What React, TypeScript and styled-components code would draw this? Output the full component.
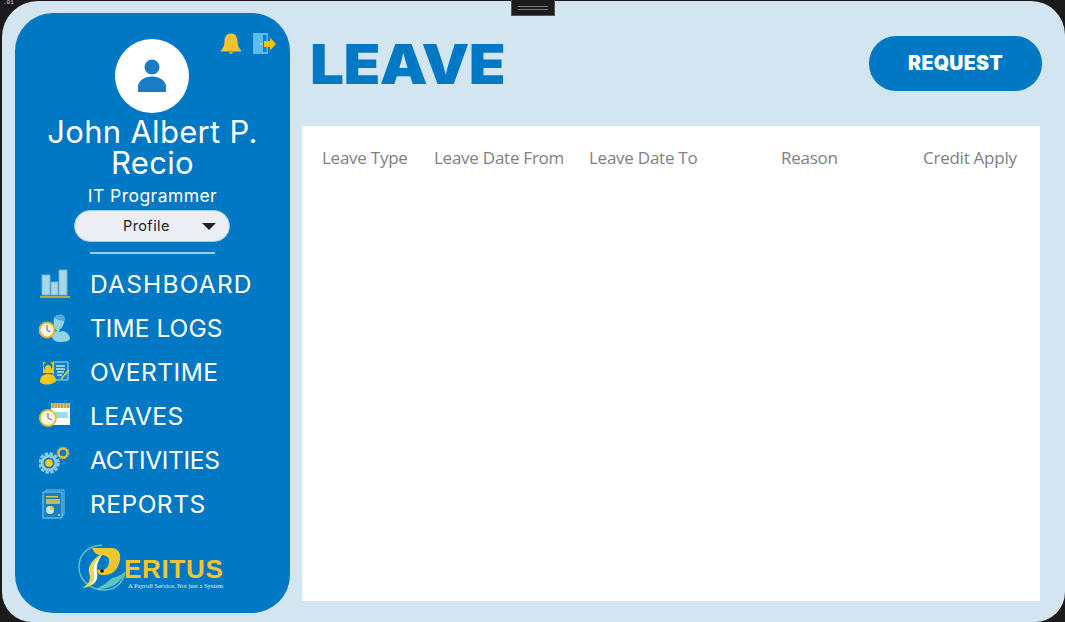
import React from "react";
import styled, { createGlobalStyle } from "styled-components";

const Global = createGlobalStyle`
  html, body { margin: 0; padding: 0; width: 1065px; height: 622px; overflow: hidden; background: #1b1b1b; }
  #root { width: 1065px; height: 622px; }
  * { box-sizing: border-box; }
`;

const Desktop = styled.div`
  position: relative;
  width: 1065px;
  height: 622px;
  padding: 1px 0 0 2px;
  background: #1b1b1b;
`;

const Window = styled.div`
  width: 1063px;
  height: 621px;
  display: flex;
  gap: 12px;
  padding: 12px 0 9px 13px;
  background: #d4e5f2;
  border-radius: 36px 34px 30px 30px;
`;

const BackdropText = styled.span`
  position: absolute;
  top: 0;
  left: 3px;
  color: #d8d8d8;
  font: 400 6px/6px "Liberation Mono", monospace;
`;

const Notch = styled.div`
  position: absolute;
  top: 0;
  left: 511px;
  width: 44px;
  height: 16px;
  background: #1c1c1c;
  border: 1px solid #555;
  border-top: none;
  display: flex;
  flex-direction: column;
  align-items: center;
  gap: 2px;
  padding-top: 6px;
`;

const NotchLine = styled.span`
  width: 30px;
  height: 1px;
  background: #777;
`;

const Sidebar = styled.aside`
  width: 275px;
  height: 600px;
  flex: none;
  display: flex;
  flex-direction: column;
  align-items: center;
  padding-top: 26px;
  position: relative;
  background: #0078c4;
  border-radius: 38px;
`;

const TopIcons = styled.div`
  position: absolute;
  top: 19px;
  left: 204px;
  display: flex;
  gap: 10px;
  align-items: center;
`;

const Avatar = styled.div`
  width: 74px;
  height: 74px;
  flex: none;
  margin-right: 2px;
  border-radius: 50%;
  background: #fff;
  display: flex;
  align-items: center;
  justify-content: center;
`;

const Name = styled.div`
  width: 230px;
  margin-top: 3px;
  color: #fff;
  font: 400 31px/31px "Inter", "Liberation Sans", sans-serif;
  letter-spacing: 0.3px;
  text-align: center;
`;

const Role = styled.div`
  margin-top: 7px;
  color: #fff;
  font: 400 17.5px/22px "Inter", "Liberation Sans", sans-serif;
  letter-spacing: 0.45px;
  text-align: center;
`;

const ProfileSelect = styled.div`
  width: 156px;
  height: 32px;
  margin-top: 3px;
  margin-right: 1px;
  padding: 0 13px 0 48px;
  flex: none;
  display: flex;
  align-items: center;
  justify-content: space-between;
  background: #ebeff3;
  border: 1px solid #9fc8e6;
  border-radius: 16px;
  color: #222;
  font: 400 14.5px/1 "Inter", "Liberation Sans", sans-serif;
  letter-spacing: 0.4px;
`;

const Caret = styled.span`
  width: 0;
  height: 0;
  border-left: 7px solid transparent;
  border-right: 7px solid transparent;
  border-top: 7px solid #222;
`;

const Divider = styled.div`
  width: 125px;
  height: 2px;
  flex: none;
  margin-top: 10px;
  background: #9fcbea;
`;

const Nav = styled.nav`
  width: 100%;
  margin-top: 8px;
  padding-left: 24px;
  display: flex;
  flex-direction: column;
`;

const NavItem = styled.div<{ $track: number }>`
  height: 44px;
  display: flex;
  align-items: center;
  gap: 19px;
  color: #fff;
  font: 400 24.5px/1 "Inter", "Liberation Sans", sans-serif;
  letter-spacing: ${(p) => p.$track}px;
`;

const NavIcon = styled.svg`
  width: 32px;
  height: 32px;
  flex: none;
`;

const Logo = styled.svg`
  width: 150px;
  height: 50px;
  flex: none;
  margin-top: 18px;
  margin-left: 1px;
`;

const LogoWord = styled.text`
  fill: #f0c62e;
  font: 700 26px "Liberation Sans", Arial, sans-serif;
  letter-spacing: 0.7px;
`;

const LogoTag = styled.text`
  fill: #e8f0f6;
  font: 400 6.5px "Liberation Serif", serif;
`;

const Main = styled.main`
  flex: 1;
  display: flex;
  flex-direction: column;
  min-width: 0;
`;

const Header = styled.header`
  height: 113px;
  display: flex;
  align-items: flex-start;
  justify-content: space-between;
  padding: 23px 23px 0 8px;
`;

const Title = styled.h1`
  margin: 1px 0 0;
  color: #0078c4;
  font: 900 55.5px/54px "Inter", "Liberation Sans", sans-serif;
  letter-spacing: -0.6px;
  transform: scaleX(1.085);
  transform-origin: left center;
`;

const RequestButton = styled.button`
  width: 173px;
  height: 55px;
  border: none;
  border-radius: 27px;
  background: #0078c4;
  color: #fff;
  font: 900 19.5px/1 "Inter", "Liberation Sans", sans-serif;
  letter-spacing: 0.3px;
`;

const Panel = styled.section`
  width: 738px;
  height: 475px;
  background: #fff;
`;

const Columns = styled.div`
  display: flex;
  align-items: center;
  height: 62px;
  padding-left: 20px;
  color: #808080;
  font: 400 17px/1 "Open Sans", "Liberation Sans", sans-serif;
  letter-spacing: -0.25px;
`;

const Column = styled.div<{ $w: number }>`
  width: ${(p) => p.$w}px;
  flex: none;
  white-space: nowrap;
`;

const Bell = () => (
  <svg width="24" height="24" viewBox="0 0 24 24">
    <path d="M12 1.500c-4.600 0-6.500 3.600-6.500 7.500 0 4.600-1.200 7-3.700 9.500v1h20.400v-1c-2.500-2.500-3.700-4.900-3.700-9.500 0-3.900-1.900-7.500-6.500-7.500z" fill="#f2c230" />
    <path d="M10 20h4c0 1.300-.8 2-2 2s-2-.7-2-2z" fill="#e0a91f" />
  </svg>
);

const Door = () => (
  <svg width="24" height="24" viewBox="0 0 24 24">
    <path d="M0 1h15v21H0z" fill="#5dbcef" />
    <path d="M10 3h3.500v17H10z" fill="#0f80c9" />
    <circle cx="8" cy="12" r=".8" fill="#d8f0fb" />
    <path d="M11 9h6V5.500l6 6.500-6 6.500V15h-6z" fill="#fdc010" />
  </svg>
);

const DashboardIcon = () => (
  <NavIcon viewBox="0 0 32 32">
    <path d="M3 7h8v20H3zM12 14h7v13h-7zM20 2h8v25h-8z" fill="#a9d8ea" stroke="#6db4d8" />
    <path d="M1 28h30v2H1z" fill="#b9a84e" />
  </NavIcon>
);

const TimeIcon = () => (
  <NavIcon viewBox="0 0 32 32">
    <path d="M15 6c1-3 5-4 8-3 3 1 3 4 2 8-1 3-2 5-4 6l-1 3 4-1c4 1 7 4 7 8-1 2-4 3-9 3-5 0-9-2-9-6 0-2 2-4 5-5-3-3-4-8-3-13z" fill="#90d4e8" />
    <path d="M15 6c1-3 5-4 8-3 3 1 3 4 2 6-3-1-7-1-10-3z" fill="#4fa8d6" />
    <circle cx="8" cy="18" r="7.500" fill="#f4f4ec" stroke="#e2b52b" strokeWidth="2" />
    <path d="M8 13v5l3 2" fill="none" stroke="#777" strokeWidth="1.200" />
  </NavIcon>
);

const OvertimeIcon = () => (
  <NavIcon viewBox="0 0 32 32">
    <path d="M14 6h15v18H14z" fill="#0d80c8" stroke="#a6d8ef" />
    <path d="M17 10h9M17 13h9M18 16h7M18 19h5" stroke="#c3e7f5" strokeWidth="1.300" />
    <path d="M22 23l8-9" stroke="#e8c63a" strokeWidth="1.800" />
    <path d="M4 6h11v11H4z" fill="#fbc715" />
    <circle cx="9" cy="10" r="4.500" fill="#0b78bd" />
    <path d="M1 26c0-6 4-8 8-8s8 2 8 7c-3 4-12 5-16 1z" fill="#fbc715" />
    <circle cx="9" cy="12" r="3" fill="#fbc715" />
  </NavIcon>
);

const LeavesIcon = () => (
  <NavIcon viewBox="0 0 32 32">
    <path d="M12 3h19v22H12z" fill="#fff" />
    <path d="M12 3h19v5H12z" fill="#e1c460" />
    <path d="M14 3v5M17 3v5M20 3v5M23 3v5M26 3v5M29 3v5" stroke="#8d8a50" />
    <path d="M16 12h13v6H16z" fill="#9ddcf0" />
    <circle cx="9" cy="18" r="8" fill="#f6f6ee" stroke="#e2c02c" strokeWidth="2" />
    <path d="M9 13v5l4 2" fill="none" stroke="#7a7a7a" strokeWidth="1.200" />
  </NavIcon>
);

const ActivitiesIcon = () => (
  <NavIcon viewBox="0 0 32 32">
    <circle cx="10" cy="19" r="9.500" fill="none" stroke="#8ecbe8" strokeWidth="2.500" strokeDasharray="3.500 1.500" />
    <circle cx="10" cy="19" r="7" fill="#0c78c0" stroke="#8ecbe8" strokeWidth="3" />
    <circle cx="10" cy="19" r="3.800" fill="#f9cd10" />
    <circle cx="24" cy="9" r="4.500" fill="none" stroke="#e1c33b" strokeWidth="2.400" />
    <circle cx="24" cy="9" r="6" fill="none" stroke="#d9bd3a" strokeWidth="1" strokeDasharray="1.500 1.500" />
  </NavIcon>
);

const ReportsIcon = () => (
  <NavIcon viewBox="0 0 32 32">
    <path d="M7 2h18v25H7z" fill="none" stroke="#7fc2e4" />
    <path d="M4 4h19v26H4z" fill="#1880bf" stroke="#8fcdea" />
    <path d="M7 8h12v1.500H7z" fill="#dcc84e" />
    <path d="M7 11h14v5H7z" fill="#b8bd62" />
    <circle cx="11" cy="22" r="4" fill="#c8e6f2" />
    <path d="M11 22v-4a4 4 0 0 1 4 4z" fill="#e8cd3c" />
    <circle cx="20" cy="27" r="1" fill="#cfe9f5" />
  </NavIcon>
);

const navItems = [
  { label: "DASHBOARD", Icon: DashboardIcon, track: 1.2 },
  { label: "TIME LOGS", Icon: TimeIcon, track: 0.05 },
  { label: "OVERTIME", Icon: OvertimeIcon, track: 0.5 },
  { label: "LEAVES", Icon: LeavesIcon, track: 0.4 },
  { label: "ACTIVITIES", Icon: ActivitiesIcon, track: -0.3 },
  { label: "REPORTS", Icon: ReportsIcon, track: 0.5 },
];

const columns = [
  { label: "Leave Type", w: 112 },
  { label: "Leave Date From", w: 155 },
  { label: "Leave Date To", w: 192 },
  { label: "Reason", w: 142 },
  { label: "Credit Apply", w: 110 },
];

export default function App() {
  return (
    <Desktop>
      <Global />
      <Window>
        <Sidebar>
          <TopIcons>
            <Bell />
            <Door />
          </TopIcons>
          <Avatar>
            <svg width="30" height="36" viewBox="0 0 30 36">
              <circle cx="15" cy="9" r="7.500" fill="#1a7cc4" />
              <path d="M1 34v-5C1 23 7 18.500 15 18.500S29 23 29 29v5z" fill="#1a7cc4" />
            </svg>
          </Avatar>
          <Name>John Albert P. Recio</Name>
          <Role>IT Programmer</Role>
          <ProfileSelect>
            Profile
            <Caret />
          </ProfileSelect>
          <Divider />
          <Nav>
            {navItems.map(({ label, Icon, track }) => (
              <NavItem key={label} $track={track}>
                <Icon />
                {label}
              </NavItem>
            ))}
          </Nav>
          <Logo viewBox="0 0 150 50">
            <path d="M24 1C8 2 1 12 1 23c0 13 11 23 26 23 11 0 18-8 20-18" fill="none" stroke="#5cc3c4" strokeWidth="1.500" />
            <path d="M18 45c14 1 25-6 29-17-3 2-8 5-13 6-4 4-10 8-16 11z" fill="#5cc3c4" />
            <path d="M14 4h19c8 0 10 6 9 12-2 11-9 15-16 15-5 0-8-2-6-6 4 3 10 0 11-6 1-6-3-8-9-8-4 0-6-3-8-7z" fill="#efc62e" />
            <path d="M26 9C16 13 9 22 11 29c2 6 1 11-7 15 11-1 17-7 15-15-1-7 2-15 7-20z" fill="#e9d65c" />
            <path d="M23 12c-6 5-8 11-7 17 1 5 0 9-4 12 6-2 8-7 7-12-1-6 0-12 4-17z" fill="#fff" />
            <circle cx="24" cy="27" r="1.800" fill="#111" />
            <LogoWord x="46" y="34">ERITUS</LogoWord>
            <LogoTag x="50" y="44">A Payroll Service, Not just a System</LogoTag>
          </Logo>
        </Sidebar>
        <Main>
          <Header>
            <Title>LEAVE</Title>
            <RequestButton>REQUEST</RequestButton>
          </Header>
          <Panel>
            <Columns>
              {columns.map((c) => (
                <Column key={c.label} $w={c.w}>
                  {c.label}
                </Column>
              ))}
            </Columns>
          </Panel>
        </Main>
      </Window>
      <BackdropText>.01</BackdropText>
      <Notch>
        <NotchLine />
        <NotchLine />
      </Notch>
    </Desktop>
  );
}
